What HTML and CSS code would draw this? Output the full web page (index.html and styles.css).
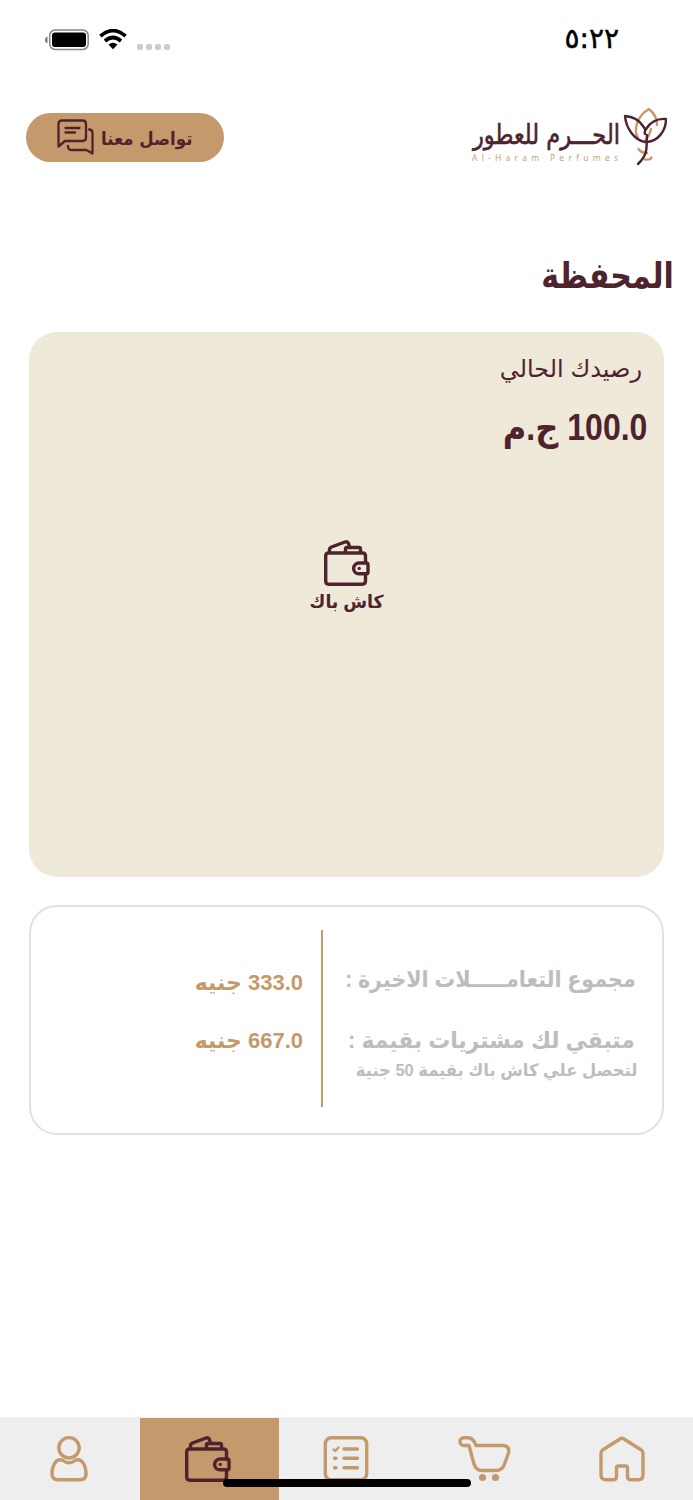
FILE: index.html
```html
<!DOCTYPE html>
<html lang="ar" dir="rtl">
<head>
    <meta charset="UTF-8">
    <meta name="viewport" content="width=device-width, initial-scale=1.0">
    <title>المحفظة</title>
    <link rel="stylesheet" href="styles.css">
</head>
<body>
    <!-- Shared wallet icon -->
    <svg class="symbols" width="0" height="0">
        <symbol id="wallet" viewBox="0 0 48 48">
            <g fill="none" stroke="currentColor" stroke-width="3.4" stroke-linejoin="round">
                <path d="M42.500 24V17Q42.500 14 39.500 14H5.500Q2.700 14 2.700 17V42Q2.700 45.200 6 45.200H39Q42.500 45.200 42.500 42V35"/>
                <path d="M6.500 13V10.500Q6.500 8.800 8.500 8L22 3Q24.500 2.200 25.500 4.500L26.500 7.500"/>
                <path d="M22.500 13.500V10Q22.500 8.500 24 8.500H36Q37.500 8.500 37.500 10V13.500"/>
                <path d="M43.500 24H36A5.400 5.400 0 0 0 36 34.800H43.500Q45 34.800 45 33V25.800Q45 24 43.500 24Z"/>
            </g>
            <circle cx="36.200" cy="29.400" r="1.700" fill="currentColor"/>
        </symbol>
    </svg>

    <div class="status-bar">
        <div class="status-icons">
            <svg width="44" height="22" viewBox="0 0 44 22">
                <path d="M2.500 7.500Q0 8 0 11T2.500 14Z" fill="#777"/>
                <rect x="4.700" y="1" width="38.500" height="19.500" rx="5.500" fill="#fff" stroke="#858585" stroke-width="1.500"/>
                <rect x="7" y="3.500" width="34" height="14.500" rx="3" fill="#000"/>
            </svg>
            <svg class="wifi" width="28" height="21" viewBox="0 0 28 21">
                <g fill="none" stroke="#000" stroke-width="3.700">
                    <path d="M1.400 7.200Q14-4 26.600 7.200"/>
                    <path d="M6 12Q14 5 22 12"/>
                </g>
                <path d="M9.500 15.500Q14 12 18.500 15.500L14 20.200Z"/>
            </svg>
            <div class="signal"><i></i><i></i><i></i><i></i></div>
        </div>
        <span class="time">٥:٢٢</span>
    </div>

    <header>
        <svg class="logo" width="196" height="60" viewBox="0 0 196 60">
            <text class="logo-name" x="149" y="37" textLength="147" lengthAdjust="spacingAndGlyphs">الحـــرم للعطور</text>
            <text class="logo-sub" x="1" y="53.500" textLength="146">Al-Haram Perfumes</text>
            <g fill="none" stroke-width="2.400" stroke-linecap="round" stroke-linejoin="round">
                <g stroke="#c49a6c">
                    <path d="M167 31C162 23 166 9 178 2C183 6 186 12 186 18M180 22Q178 30 174 34"/>
                    <path d="M167.500 42Q170 46 176 46M174 52.500Q180 53 180.500 50.500"/>
                </g>
                <g stroke="#4e232e">
                    <path d="M174 35C163 33 155 21 154 9Q166 10 172 19L174 22"/>
                    <path d="M176 35C187 34 195 24 195 12Q182 11 175 22Q173 25 174 27"/>
                    <path d="M176 28C175 39 178 47 167 57"/>
                </g>
            </g>
        </svg>
        <button class="contact-button">
            <span>تواصل معنا</span>
            <svg width="37" height="36" viewBox="0 0 37 36">
                <g fill="none" stroke="#4e232e" stroke-width="2.300" stroke-linecap="round" stroke-linejoin="round">
                    <path d="M1.500 27.500V5Q1.500 1.500 5 1.500H25.500Q29 1.500 29 5V18.500Q29 22 25.500 22H8Z"/>
                    <path d="M8.500 9H22.500M8.500 13.500H18"/>
                    <path d="M32 10.500Q35.500 10.500 35.500 14V34.500L29.500 31H14.500Q11 31 11 27"/>
                </g>
            </svg>
        </button>
    </header>

    <main>
        <h1><span>المحفظة</span></h1>

        <section class="balance-card">
            <p class="balance-label"><span>رصيدك الحالي</span></p>
            <p class="balance-value"><span>100.0 ج.م</span></p>
            <div class="cashback">
                <svg width="48" height="48"><use href="#wallet"/></svg>
                <span>كاش باك</span>
            </div>
        </section>

        <section class="summary-card">
            <div class="summary-labels">
                <p class="total"><span>مجموع التعامـــــلات الاخيرة :</span></p>
                <p class="remaining"><span>متبقي لك مشتريات بقيمة :</span></p>
                <p class="hint"><span>لتحصل علي كاش باك بقيمة 50 جنية</span></p>
            </div>
            <div class="summary-values">
                <p><span>333.0 جنيه</span></p>
                <p><span>667.0 جنيه</span></p>
            </div>
        </section>
    </main>

    <nav>
        <a class="nav-item">
            <svg width="48" height="48" viewBox="0 0 48 48">
                <path d="M3 18Q3 16 5 14.700L22 4Q24 2.500 26 4L43 14.700Q45 16 45 18V40Q45 44.800 40 44.800H33Q29.500 44.800 29.500 41.500V33Q29.500 31 27.500 31H20.500Q18.500 31 18.500 33V41.500Q18.500 44.800 15 44.800H8Q3 44.800 3 40Z"/>
            </svg>
        </a>
        <a class="nav-item">
            <svg width="54" height="48" viewBox="0 0 54 48">
                <path d="M12 10.500H6.800A3.900 3.900 0 0 1 6.800 2.700H11Q16.500 2.700 19 10.500H46Q53 11 51.500 18L47.500 29Q45.500 35.500 39 35.500H25Q19 35.500 17 29L12 10.500Z"/>
                <circle class="dot" cx="25.500" cy="42.500" r="3.600"/>
                <circle class="dot" cx="38.500" cy="42.500" r="3.600"/>
            </svg>
        </a>
        <a class="nav-item">
            <svg width="48" height="48" viewBox="0 0 48 48">
                <rect x="3.300" y="2.800" width="41.400" height="42" rx="6"/>
                <path d="M22 14H35.500M22 23.300H35.500M22 32.700H35.500M12.500 23.300H14M12.500 32.700H14"/>
                <path class="check" d="M11.500 14.500L13.500 16L16.500 12.500"/>
            </svg>
        </a>
        <a class="nav-item active">
            <svg width="48" height="48"><use href="#wallet"/></svg>
        </a>
        <a class="nav-item">
            <svg width="48" height="48" viewBox="0 0 48 48">
                <circle cx="24" cy="12.800" r="10.200"/>
                <path d="M18 25.500Q24 30 30 25.500C37 22.500 41 31 41 39Q41 44.800 35 44.800H13Q7 44.800 7 39C7 31 11 22.500 18 25.500Z"/>
            </svg>
        </a>
        <div class="home-indicator"></div>
    </nav>
</body>
</html>
```
FILE: styles.css
```css
* {
    box-sizing: border-box;
}

body {
    margin: 0;
    height: 1500px;
    display: flex;
    flex-direction: column;
    background-color: #fff;
    color: #4e232e;
    font-family: "Liberation Sans", "DejaVu Sans", sans-serif;
    overflow: hidden;
}

h1, p {
    margin: 0;
    white-space: nowrap;
}

p span, h1 span {
    display: inline-block;
    transform-origin: right center;
}

.symbols {
    position: absolute;
}

.status-bar {
    direction: ltr;
    height: 78px;
    padding: 1px 74px 0 45px;
    display: flex;
    justify-content: space-between;
    align-items: center;
}

.status-icons {
    display: flex;
    align-items: center;
}

.wifi {
    margin-left: 10px;
}

.signal {
    display: flex;
    gap: 3px;
    margin: 14px 0 0 10px;
}

.signal i {
    width: 6px;
    height: 6px;
    border-radius: 2px;
    background-color: #ccc;
}

.time {
    margin-top: -3px;
    font-family: "DejaVu Sans", sans-serif;
    font-size: 28px;
    color: #000;
    -webkit-text-stroke: 0.5px #000;
}

header {
    height: 122px;
    padding: 29px 26px 0;
    display: flex;
    justify-content: space-between;
    align-items: flex-start;
}

.logo-name {
    font-family: "DejaVu Sans", sans-serif;
    font-size: 27px;
    fill: #4e232e;
    stroke: #4e232e;
    stroke-width: 0.6;
}

.logo-sub {
    direction: ltr;
    font-family: "Open Sans", sans-serif;
    font-size: 8.5px;
    fill: #c49a6c;
}

.contact-button {
    width: 198px;
    height: 49px;
    margin-top: 6px;
    padding: 0 32px 1px;
    display: flex;
    align-items: center;
    justify-content: space-between;
    border: none;
    border-radius: 25px;
    background-color: #c49a6c;
    color: #4e232e;
    font-family: "DejaVu Sans", sans-serif;
    font-size: 18px;
    font-weight: bold;
    white-space: nowrap;
}

.contact-button span {
    padding-top: 2px;
    margin-left: -12px;
    transform: scaleX(0.92);
    transform-origin: right center;
}

.contact-button svg {
    flex: none;
    margin-left: -1px;
}

main {
    flex: 1;
    padding: 0 29px;
}

h1 {
    height: 132px;
    margin-right: -10px;
    padding-top: 51px;
    font-size: 36px;
    line-height: 50px;
}

h1 span {
    transform: scaleX(0.835);
}

.balance-card {
    height: 545px;
    padding: 20px 17px 0;
    border-radius: 28px;
    background-color: #efe9da;
}

.balance-label {
    height: 44px;
    padding-right: 5px;
    font-size: 24px;
    line-height: 34px;
}

.balance-value {
    height: 143px;
    font-size: 36px;
    font-weight: bold;
    line-height: 64px;
}

.balance-value span {
    transform: scaleX(0.89);
}

.cashback {
    display: flex;
    flex-direction: column;
    align-items: center;
    font-size: 18px;
    font-weight: bold;
    line-height: 30px;
}

.cashback span {
    transform: scaleX(0.96);
}

.summary-card {
    height: 230px;
    margin-top: 28px;
    padding: 23px 26px;
    display: flex;
    border: 2px solid #e1e1e1;
    border-radius: 28px;
    font-weight: bold;
}

.summary-labels {
    width: 315px;
    height: 177px;
    border-left: 2px solid #c49a6c;
    color: #bdbdbd;
}

.total, .remaining {
    font-size: 23px;
    line-height: 40px;
}

.total {
    height: 61px;
    margin-top: 29px;
}

.total span {
    transform: scaleX(0.897);
}

.remaining {
    padding-right: 1px;
}

.remaining span {
    transform: scaleX(0.95);
}

.hint {
    padding-top: 1px;
    margin-right: -1px;
    font-size: 17px;
    line-height: 20px;
}

.hint span {
    transform: scaleX(0.963);
}

.summary-values {
    padding: 33px 18px 0 0;
    color: #c49a6c;
    font-size: 22px;
    line-height: 40px;
}

.summary-values p {
    height: 58px;
}

nav {
    position: relative;
    height: 83px;
    display: grid;
    grid-template-columns: 139px 138px 137px 139px 140px;
    background-color: #eee;
    border-top: 1px solid #f3f3f3;
}

.nav-item {
    padding: 17px 4px 0 1px;
    text-align: center;
    color: #4e232e;
}

.nav-item svg {
    fill: none;
    stroke: #c49a6c;
    stroke-width: 3.4;
    stroke-linecap: round;
    stroke-linejoin: round;
}

.nav-item.active {
    background-color: #c49a6c;
}

.nav-item.active svg {
    stroke: none;
}

.nav-item .dot {
    fill: #c49a6c;
    stroke: none;
}

.nav-item .check {
    stroke-width: 2.4;
}

.home-indicator {
    position: absolute;
    left: 223px;
    bottom: 13px;
    width: 248px;
    height: 8px;
    border-radius: 4px;
    background-color: #000;
}
```
